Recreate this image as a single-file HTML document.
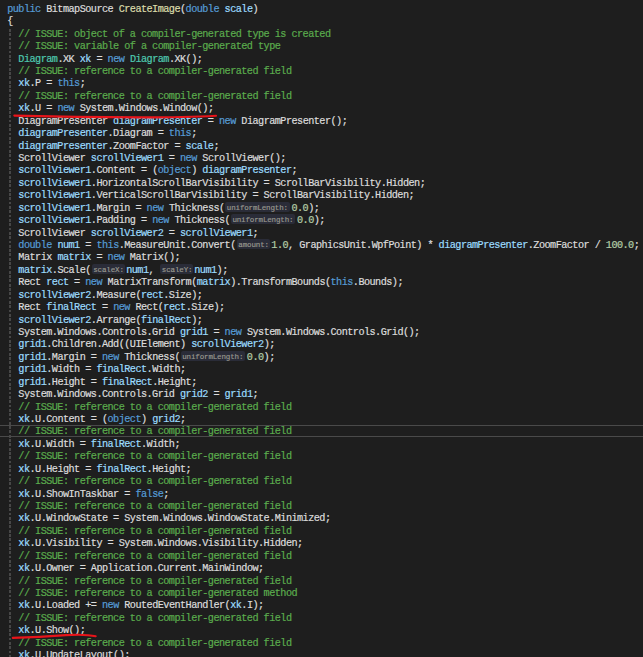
<!DOCTYPE html>
<html><head><meta charset="utf-8">
<style>
html,body{margin:0;padding:0;}
body{width:643px;height:657px;overflow:hidden;background:#1e1e1e;position:relative;}
.l{position:absolute;white-space:pre;font-family:"Liberation Mono",monospace;font-size:10.2px;letter-spacing:-0.54px;line-height:12.43px;-webkit-text-stroke:0.2px currentColor;color:#dcdcdc;}
.k{color:#569cd6}
.c{color:#5bac4d}
.v{color:#9cdcfe}
.m{color:#dcdcaa}
.n{color:#b5cea8}
.t{color:#4ec9b0}
.h{display:inline-block;position:relative;height:12px;vertical-align:top;}
.h b{position:absolute;top:-1px;height:10px;background:#2a2c38;border-radius:2px;}
.h i{position:absolute;top:0;font-style:normal;font-family:"Liberation Mono",monospace;font-size:7.5px;letter-spacing:-0.14px;-webkit-text-stroke:0.15px currentColor;line-height:10px;color:#9a9a90;padding-left:1.4px;}
.guide{position:absolute;left:9px;width:2px;top:29px;height:640px;background:repeating-linear-gradient(to bottom,#474747 0,#474747 2.8px,transparent 2.8px,transparent 4.317px);}
.cur{position:absolute;left:0;width:643px;top:425px;height:10px;border-top:1px solid #4a4a4a;border-bottom:1px solid #4a4a4a;}
svg{position:absolute;left:0;top:0}
</style></head><body>
<div class="guide"></div>
<div class="cur"></div>
<div class="l" style="top:3.84px;left:7.20px"><span class="k">public</span> BitmapSource <span class="m">CreateImage</span>(<span class="k">double</span> <span class="v">scale</span>)</div>
<div class="l" style="top:16.27px;left:7.20px">{</div>
<div class="l" style="top:28.70px;left:18.36px"><span class="c">// ISSUE: object of a compiler-generated type is created</span></div>
<div class="l" style="top:41.13px;left:18.36px"><span class="c">// ISSUE: variable of a compiler-generated type</span></div>
<div class="l" style="top:53.56px;left:18.36px"><span class="t">Diagram</span>.XK <span class="v">xk</span> = <span class="k">new</span> <span class="t">Diagram</span>.XK();</div>
<div class="l" style="top:65.99px;left:18.36px"><span class="c">// ISSUE: reference to a compiler-generated field</span></div>
<div class="l" style="top:78.42px;left:18.36px"><span class="v">xk</span>.P = <span class="k">this</span>;</div>
<div class="l" style="top:90.85px;left:18.36px"><span class="c">// ISSUE: reference to a compiler-generated field</span></div>
<div class="l" style="top:103.28px;left:18.36px"><span class="v">xk</span>.U = <span class="k">new</span> System.Windows.Window();</div>
<div class="l" style="top:115.71px;left:18.36px">DiagramPresenter <span class="v">diagramPresenter</span> = <span class="k">new</span> DiagramPresenter();</div>
<div class="l" style="top:128.14px;left:18.36px"><span class="v">diagramPresenter</span>.Diagram = <span class="k">this</span>;</div>
<div class="l" style="top:140.57px;left:18.36px"><span class="v">diagramPresenter</span>.ZoomFactor = <span class="v">scale</span>;</div>
<div class="l" style="top:153.00px;left:18.36px">ScrollViewer <span class="v">scrollViewer1</span> = <span class="k">new</span> ScrollViewer();</div>
<div class="l" style="top:165.43px;left:18.36px"><span class="v">scrollViewer1</span>.Content = (<span class="k">object</span>) <span class="v">diagramPresenter</span>;</div>
<div class="l" style="top:177.86px;left:18.36px"><span class="v">scrollViewer1</span>.HorizontalScrollBarVisibility = ScrollBarVisibility.Hidden;</div>
<div class="l" style="top:190.29px;left:18.36px"><span class="v">scrollViewer1</span>.VerticalScrollBarVisibility = ScrollBarVisibility.Hidden;</div>
<div class="l" style="top:202.72px;left:18.36px"><span class="v">scrollViewer1</span>.Margin = <span class="k">new</span> Thickness(<span class="h" style="width:66.8px"><b style="left:0.8px;width:64.5px"></b><i style="left:0.8px;width:64.5px">uniformLength:</i></span><span class="n">0.0</span>);</div>
<div class="l" style="top:215.15px;left:18.36px"><span class="v">scrollViewer1</span>.Padding = <span class="k">new</span> Thickness(<span class="h" style="width:66.8px"><b style="left:0.8px;width:64.5px"></b><i style="left:0.8px;width:64.5px">uniformLength:</i></span><span class="n">0.0</span>);</div>
<div class="l" style="top:227.58px;left:18.36px">ScrollViewer <span class="v">scrollViewer2</span> = <span class="v">scrollViewer1</span>;</div>
<div class="l" style="top:240.01px;left:18.36px"><span class="k">double</span> <span class="v">num1</span> = <span class="k">this</span>.MeasureUnit.Convert(<span class="h" style="width:35.6px"><b style="left:1.2px;width:33.4px"></b><i style="left:1.2px;width:33.4px">amount:</i></span><span class="n">1.0</span>, GraphicsUnit.WpfPoint) * <span class="v">diagramPresenter</span>.ZoomFactor / <span class="n">100.0</span>;</div>
<div class="l" style="top:252.44px;left:18.36px">Matrix <span class="v">matrix</span> = <span class="k">new</span> Matrix();</div>
<div class="l" style="top:264.87px;left:18.36px"><span class="v">matrix</span>.Scale(<span class="h" style="width:35.4px"><b style="left:1.0px;width:33.6px"></b><i style="left:1.0px;width:33.6px">scaleX:</i></span><span class="v">num1</span>, <span class="h" style="width:34.6px"><b style="left:0.8px;width:32.8px"></b><i style="left:0.8px;width:32.8px">scaleY:</i></span><span class="v">num1</span>);</div>
<div class="l" style="top:277.30px;left:18.36px">Rect <span class="v">rect</span> = <span class="k">new</span> MatrixTransform(<span class="v">matrix</span>).TransformBounds(<span class="k">this</span>.Bounds);</div>
<div class="l" style="top:289.73px;left:18.36px"><span class="v">scrollViewer2</span>.Measure(<span class="v">rect</span>.Size);</div>
<div class="l" style="top:302.16px;left:18.36px">Rect <span class="v">finalRect</span> = <span class="k">new</span> Rect(<span class="v">rect</span>.Size);</div>
<div class="l" style="top:314.59px;left:18.36px"><span class="v">scrollViewer2</span>.Arrange(<span class="v">finalRect</span>);</div>
<div class="l" style="top:327.02px;left:18.36px">System.Windows.Controls.Grid <span class="v">grid1</span> = <span class="k">new</span> System.Windows.Controls.Grid();</div>
<div class="l" style="top:339.45px;left:18.36px"><span class="v">grid1</span>.Children.Add((UIElement) <span class="v">scrollViewer2</span>);</div>
<div class="l" style="top:351.88px;left:18.36px"><span class="v">grid1</span>.Margin = <span class="k">new</span> Thickness(<span class="h" style="width:66.8px"><b style="left:0.8px;width:64.5px"></b><i style="left:0.8px;width:64.5px">uniformLength:</i></span><span class="n">0.0</span>);</div>
<div class="l" style="top:364.31px;left:18.36px"><span class="v">grid1</span>.Width = <span class="v">finalRect</span>.Width;</div>
<div class="l" style="top:376.74px;left:18.36px"><span class="v">grid1</span>.Height = <span class="v">finalRect</span>.Height;</div>
<div class="l" style="top:389.17px;left:18.36px">System.Windows.Controls.Grid <span class="v">grid2</span> = <span class="v">grid1</span>;</div>
<div class="l" style="top:401.60px;left:18.36px"><span class="c">// ISSUE: reference to a compiler-generated field</span></div>
<div class="l" style="top:414.03px;left:18.36px"><span class="v">xk</span>.U.Content = (<span class="k">object</span>) <span class="v">grid2</span>;</div>
<div class="l" style="top:426.46px;left:18.36px"><span class="c">// ISSUE: reference to a compiler-generated field</span></div>
<div class="l" style="top:438.89px;left:18.36px"><span class="v">xk</span>.U.Width = <span class="v">finalRect</span>.Width;</div>
<div class="l" style="top:451.32px;left:18.36px"><span class="c">// ISSUE: reference to a compiler-generated field</span></div>
<div class="l" style="top:463.75px;left:18.36px"><span class="v">xk</span>.U.Height = <span class="v">finalRect</span>.Height;</div>
<div class="l" style="top:476.18px;left:18.36px"><span class="c">// ISSUE: reference to a compiler-generated field</span></div>
<div class="l" style="top:488.61px;left:18.36px"><span class="v">xk</span>.U.ShowInTaskbar = <span class="k">false</span>;</div>
<div class="l" style="top:501.04px;left:18.36px"><span class="c">// ISSUE: reference to a compiler-generated field</span></div>
<div class="l" style="top:513.47px;left:18.36px"><span class="v">xk</span>.U.WindowState = System.Windows.WindowState.Minimized;</div>
<div class="l" style="top:525.90px;left:18.36px"><span class="c">// ISSUE: reference to a compiler-generated field</span></div>
<div class="l" style="top:538.33px;left:18.36px"><span class="v">xk</span>.U.Visibility = System.Windows.Visibility.Hidden;</div>
<div class="l" style="top:550.76px;left:18.36px"><span class="c">// ISSUE: reference to a compiler-generated field</span></div>
<div class="l" style="top:563.19px;left:18.36px"><span class="v">xk</span>.U.Owner = Application.Current.MainWindow;</div>
<div class="l" style="top:575.62px;left:18.36px"><span class="c">// ISSUE: reference to a compiler-generated field</span></div>
<div class="l" style="top:588.05px;left:18.36px"><span class="c">// ISSUE: reference to a compiler-generated method</span></div>
<div class="l" style="top:600.48px;left:18.36px"><span class="v">xk</span>.U.Loaded += <span class="k">new</span> RoutedEventHandler(<span class="v">xk</span>.I);</div>
<div class="l" style="top:612.91px;left:18.36px"><span class="c">// ISSUE: reference to a compiler-generated field</span></div>
<div class="l" style="top:625.34px;left:18.36px"><span class="v">xk</span>.U.Show();</div>
<div class="l" style="top:637.77px;left:18.36px"><span class="c">// ISSUE: reference to a compiler-generated field</span></div>
<div class="l" style="top:650.20px;left:18.36px"><span class="v">xk</span>.U.UpdateLayout();</div>
<svg width="643" height="657" viewBox="0 0 643 657">
<path d="M14.3 115.6 C 40 116.3, 80 117.3, 140 117.4 C 180 117.4, 200 116.6, 216 115.7" stroke="#e8141a" stroke-width="2.1" fill="none" stroke-linecap="round"/>
<path d="M12.8 637.9 C 30 637.6, 50 636.5, 66 635.1 C 78 634.4, 88 634.4, 95.7 636.3" stroke="#e8141a" stroke-width="2.1" fill="none" stroke-linecap="round"/>
</svg>
</body></html>
